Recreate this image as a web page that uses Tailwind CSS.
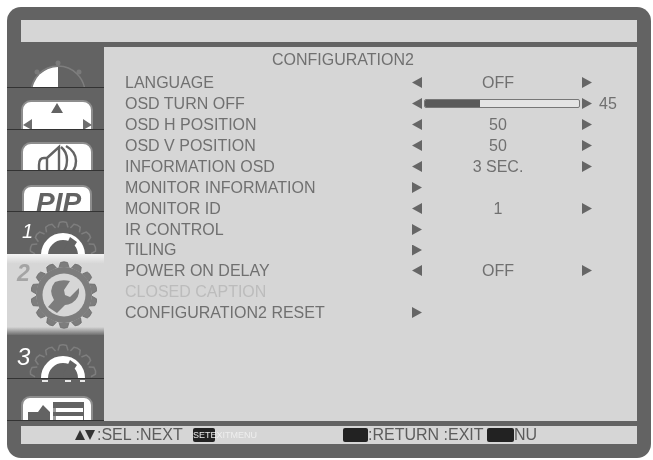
<!DOCTYPE html>
<html lang="en">
<head>
<meta charset="UTF-8" />
<title>CONFIGURATION2</title>
<script src="https://cdn.jsdelivr.net/npm/@tailwindcss/browser@4"></script>
</head>
<body class="bg-white w-[653px] h-[460px] overflow-hidden font-['Liberation_Sans',Arial,sans-serif] text-[16px] text-[#707070]">
<!-- shared gear teeth -->
<svg class="absolute" width="0" height="0">
  <defs>
    <g id="teeth">
      <path id="tooth" d="M-5 -27.5L-3.5 -32.5Q0 -34 3.5 -32.5L5 -27.5" />
      <use href="#tooth" transform="rotate(25.7)" /><use href="#tooth" transform="rotate(51.4)" />
      <use href="#tooth" transform="rotate(77.1)" /><use href="#tooth" transform="rotate(102.8)" />
      <use href="#tooth" transform="rotate(128.5)" /><use href="#tooth" transform="rotate(154.2)" />
      <use href="#tooth" transform="rotate(180)" /><use href="#tooth" transform="rotate(205.7)" />
      <use href="#tooth" transform="rotate(231.4)" /><use href="#tooth" transform="rotate(257.1)" />
      <use href="#tooth" transform="rotate(282.8)" /><use href="#tooth" transform="rotate(308.5)" />
      <use href="#tooth" transform="rotate(334.2)" />
    </g>
  </defs>
</svg>
<div class="m-[7px] mb-0 w-[644px] h-[451px] rounded-[14px] bg-[#636363] px-[14px] pt-[13px] blur-[0.4px]">
  <!-- top bar -->
  <div class="h-[22px] bg-[#d6d6d6]"></div>

  <div class="flex h-[374px] mt-[5px] -ml-[14px]">
    <!-- side tabs -->
    <div class="w-[97px] shrink-0 flex flex-col">
      <div class="h-[41px] border-b border-[#333] overflow-hidden">
        <svg width="97" height="41" viewBox="7 47 97 41">
          <circle cx="58" cy="63" r="2.5" fill="#7a7a7a" />
          <circle cx="37" cy="72" r="2.5" fill="#7a7a7a" />
          <circle cx="79" cy="72" r="2.5" fill="#7a7a7a" />
          <circle cx="58" cy="93" r="27" fill="#636363" stroke="#7e7e7e" stroke-width="1.5" />
          <path d="M58 93V67A26 26 0 0 0 32 93Z" fill="#fff" />
        </svg>
      </div>
      <div class="h-[42px] border-b border-[#333] overflow-hidden">
        <svg width="97" height="42" viewBox="7 88 97 42">
          <rect x="22" y="101" width="70" height="40" rx="9" fill="#fff" stroke="#8d8d8d" stroke-width="2" />
          <path d="M57 103l6 10H51Z" fill="#636363" />
          <path d="M23 125l9-6v11ZM92 125l-9-6v11Z" fill="#6e6e6e" />
        </svg>
      </div>
      <div class="h-[41px] border-b border-[#333] overflow-hidden">
        <svg width="97" height="41" viewBox="7 130 97 41">
          <rect x="22" y="143" width="70" height="40" rx="9" fill="#fff" stroke="#8d8d8d" stroke-width="2" />
          <path d="M47 158h-3c-4 0-5 3-5 7v3c0 3 1 4 4 4h4ZM47 158l12-11v25H47ZM61 147c5 4 6 8 6 13s-1 9-4 12M66 146c7 4 10 9 10 15 0 4-1 8-4 11" fill="none" stroke="#636363" stroke-width="2.4" />
        </svg>
      </div>
      <div class="relative h-[41px] border-b border-[#333] overflow-hidden">
        <div class="ml-[15px] mt-[14px] w-[70px] h-[40px] rounded-[9px] bg-white border-2 border-[#8d8d8d]"></div>
        <span class="absolute left-[29px] top-[18px] text-[28px] leading-[28px] font-bold italic text-[#636363]">PIP</span>
      </div>
      <div class="relative h-[42px] overflow-hidden">
        <span class="absolute left-[15px] top-[9px] text-[20px] leading-[20px] italic text-white">1</span>
        <svg class="absolute left-0 top-0" width="97" height="42" viewBox="7 212 97 42">
          <use href="#teeth" transform="translate(63 255)" fill="#636363" stroke="#7e7e7e" stroke-width="1.5" />
          <circle cx="63" cy="255" r="18.5" fill="none" stroke="#fff" stroke-width="7" />
          <path d="M63 252l7-15 7 5-8 12-5 4Z" fill="#636363" />
        </svg>
      </div>
      <!-- active tab -->
      <div class="relative h-[81px] bg-[linear-gradient(#f4f4f4,#d6d6d6_12%,#d6d6d6_90%,#6e6e6e)] overflow-hidden">
        <span class="absolute left-[10px] top-[7px] text-[23px] leading-[24px] font-bold italic text-[#a4a4a4]">2</span>
        <svg class="absolute left-0 top-0" width="97" height="81" viewBox="7 254 97 81">
          <use href="#teeth" transform="translate(64 295)" fill="#7d7d7d" stroke="#6c6c6c" stroke-width="0.8" />
          <circle cx="64" cy="295" r="28" fill="#7d7d7d" />
          <circle cx="64" cy="295" r="21.5" fill="#d6d6d6" />
          <path d="M55 282Q62 279 70 281L64 290L65 295L70 297L79 288Q80 298 72 303Q68 305 65 305L57 313L48 307L54 300Q48 290 55 282Z" fill="#7d7d7d" />
        </svg>
      </div>
      <div class="relative h-[44px] border-b border-[#333] overflow-hidden">
        <span class="absolute left-[10px] top-[10px] text-[24px] leading-[24px] italic text-white">3</span>
        <svg class="absolute left-0 top-0" width="97" height="44" viewBox="7 335 97 44">
          <use href="#teeth" transform="translate(63 378)" fill="#636363" stroke="#7e7e7e" stroke-width="1.5" />
          <circle cx="63" cy="378" r="18.5" fill="none" stroke="#fff" stroke-width="7" />
          <path d="M63 375l7-15 7 5-8 12-5 4Z" fill="#636363" />
        </svg>
      </div>
      <div class="h-[42px] border-b border-[#333] overflow-hidden">
        <svg width="97" height="42" viewBox="7 379 97 42">
          <path d="M42 380h6v2h-6ZM65 380h6v2h-6ZM80 380h5v2h-5Z" fill="#e8e8e8" />
          <rect x="22" y="397" width="70" height="40" rx="8" fill="#fff" stroke="#8d8d8d" stroke-width="2" />
          <path d="M28 421v-9h10l5-7 7 7v9Z" fill="#636363" />
          <path d="M53 402h31v19H53Z" fill="#636363" />
          <path d="M53 408h30v4H53ZM53 416h30v4H53Z" fill="#fff" />
          <path d="M53 408h3v4h-3ZM53 416h3v4h-3Z" fill="#9a9a9a" />
        </svg>
      </div>
    </div>

    <!-- menu panel -->
    <div class="w-[533px] bg-[#d6d6d6]">
      <p class="mt-[3px] ml-[168px] leading-[20px] h-[22px]">CONFIGURATION2</p>
      <ul class="ml-[21px] flex flex-col">
        <li class="flex items-center h-[21px] leading-[21px]"><span class="w-[287px]">LANGUAGE</span><i class="w-[10px] h-[11px] bg-[#666] [clip-path:polygon(0_50%,100%_0,100%_100%)]"></i><span class="w-[160px] pr-[8px] text-center">OFF</span><i class="w-[10px] h-[11px] bg-[#666] [clip-path:polygon(100%_50%,0_0,0_100%)]"></i></li>
        <li class="flex items-center h-[21px] leading-[21px]"><span class="w-[287px]">OSD TURN OFF</span><i class="w-[10px] h-[11px] bg-[#666] [clip-path:polygon(0_50%,100%_0,100%_100%)]"></i><span class="w-[156px] h-[9px] mx-[2px] rounded-[2px] border border-[#777] bg-[#e4e4e4] overflow-hidden"><span class="block w-[55px] h-full bg-[#5a5a5a]"></span></span><i class="w-[10px] h-[11px] bg-[#666] [clip-path:polygon(100%_50%,0_0,0_100%)]"></i><span class="ml-[7px]">45</span></li>
        <li class="flex items-center h-[21px] leading-[21px]"><span class="w-[287px]">OSD H POSITION</span><i class="w-[10px] h-[11px] bg-[#666] [clip-path:polygon(0_50%,100%_0,100%_100%)]"></i><span class="w-[160px] pr-[8px] text-center">50</span><i class="w-[10px] h-[11px] bg-[#666] [clip-path:polygon(100%_50%,0_0,0_100%)]"></i></li>
        <li class="flex items-center h-[21px] leading-[21px]"><span class="w-[287px]">OSD V POSITION</span><i class="w-[10px] h-[11px] bg-[#666] [clip-path:polygon(0_50%,100%_0,100%_100%)]"></i><span class="w-[160px] pr-[8px] text-center">50</span><i class="w-[10px] h-[11px] bg-[#666] [clip-path:polygon(100%_50%,0_0,0_100%)]"></i></li>
        <li class="flex items-center h-[21px] leading-[21px]"><span class="w-[287px]">INFORMATION OSD</span><i class="w-[10px] h-[11px] bg-[#666] [clip-path:polygon(0_50%,100%_0,100%_100%)]"></i><span class="w-[160px] pr-[8px] text-center">3 SEC.</span><i class="w-[10px] h-[11px] bg-[#666] [clip-path:polygon(100%_50%,0_0,0_100%)]"></i></li>
        <li class="flex items-center h-[21px] leading-[21px]"><span class="w-[287px]">MONITOR INFORMATION</span><i class="w-[10px] h-[11px] bg-[#666] [clip-path:polygon(100%_50%,0_0,0_100%)]"></i></li>
        <li class="flex items-center h-[21px] leading-[21px]"><span class="w-[287px]">MONITOR ID</span><i class="w-[10px] h-[11px] bg-[#666] [clip-path:polygon(0_50%,100%_0,100%_100%)]"></i><span class="w-[160px] pr-[8px] text-center">1</span><i class="w-[10px] h-[11px] bg-[#666] [clip-path:polygon(100%_50%,0_0,0_100%)]"></i></li>
        <li class="flex items-center h-[21px] leading-[21px]"><span class="w-[287px]">IR CONTROL</span><i class="w-[10px] h-[11px] bg-[#666] [clip-path:polygon(100%_50%,0_0,0_100%)]"></i></li>
        <li class="flex items-center h-[20px] leading-[20px]"><span class="w-[287px]">TILING</span><i class="w-[10px] h-[11px] bg-[#666] [clip-path:polygon(100%_50%,0_0,0_100%)]"></i></li>
        <li class="flex items-center h-[21px] leading-[21px]"><span class="w-[287px]">POWER ON DELAY</span><i class="w-[10px] h-[11px] bg-[#666] [clip-path:polygon(0_50%,100%_0,100%_100%)]"></i><span class="w-[160px] pr-[8px] text-center">OFF</span><i class="w-[10px] h-[11px] bg-[#666] [clip-path:polygon(100%_50%,0_0,0_100%)]"></i></li>
        <li class="flex items-center h-[21px] leading-[21px] text-[#bcbcbc]"><span class="w-[287px]">CLOSED CAPTION</span></li>
        <li class="flex items-center h-[21px] leading-[21px]"><span class="w-[287px]">CONFIGURATION2 RESET</span><i class="w-[10px] h-[11px] bg-[#666] [clip-path:polygon(100%_50%,0_0,0_100%)]"></i></li>
      </ul>
    </div>
  </div>

  <!-- bottom bar -->
  <div class="relative flex items-center h-[18px] mt-[5px] w-[616px] bg-[#d6d6d6] text-[#5c5c5c] leading-[18px]">
    <span class="ml-[54px] w-[10px] h-[10px] bg-[#333] [clip-path:polygon(50%_0,100%_100%,0_100%)]"></span>
    <span class="w-[10px] h-[10px] bg-[#333] [clip-path:polygon(50%_100%,100%_0,0_0)]"></span>
    <span class="ml-[2px] w-[96px]">:SEL :NEXT</span>
    <span class="w-[22px] h-[14px] rounded-[2px] bg-[#222]"></span>
    <span class="ml-[128px] w-[25px] h-[14px] rounded-[2px] bg-[#222]"></span>
    <span class="w-[119px]">:RETURN :EXIT</span>
    <span class="w-[27px] h-[14px] rounded-[2px] bg-[#222]"></span>
    <span>NU</span>
    <span class="absolute left-[172px] top-0 text-[9px] text-white/90">SETE<span class="text-white/60">XITMENU</span></span>
  </div>
</div>
</body>
</html>
